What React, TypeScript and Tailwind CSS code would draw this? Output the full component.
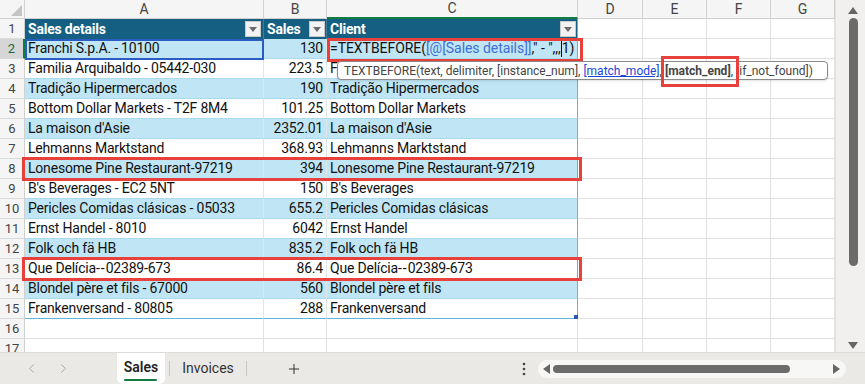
import React from "react";
import { ChevronLeft, ChevronRight, Plus } from "lucide-react";

const FONT = { fontFamily: "Roboto, 'Noto Sans', sans-serif" } as const;

const data: [string, string, string][] = [
  ["Franchi S.p.A. - 10100", "130", ""],
  ["Familia Arquibaldo - 05442-030", "223.5", "F"],
  ["Tradição Hipermercados", "190", "Tradição Hipermercados"],
  ["Bottom Dollar Markets - T2F 8M4", "101.25", "Bottom Dollar Markets"],
  ["La maison d'Asie", "2352.01", "La maison d'Asie"],
  ["Lehmanns Marktstand", "368.93", "Lehmanns Marktstand"],
  ["Lonesome Pine Restaurant-97219", "394", "Lonesome Pine Restaurant-97219"],
  ["B's Beverages - EC2 5NT", "150", "B's Beverages"],
  ["Pericles Comidas clásicas - 05033", "655.2", "Pericles Comidas clásicas"],
  ["Ernst Handel - 8010", "6042", "Ernst Handel"],
  ["Folk och fä HB", "835.2", "Folk och fä HB"],
  ["Que Delícia--02389-673", "86.4", "Que Delícia--02389-673"],
  ["Blondel père et fils - 67000", "560", "Blondel père et fils"],
  ["Frankenversand - 80805", "288", "Frankenversand"],
];

function Txt({ s }: { s: string }) {
  if (!s.includes("--")) return <>{s}</>;
  const [a, b] = s.split("--");
  return (
    <>
      {a}
      <span className="tracking-[1px]">--</span>
      {b}
    </>
  );
}

function FilterBtn() {
  return (
    <div className="w-[16px] h-[16px] bg-[#f2f2f2] border border-[#c9c9c9] flex items-center justify-center shrink-0">
      <svg width="8" height="5" viewBox="0 0 8 5">
        <path d="M0 0 L8 0 L4 5 Z" fill="#6b6b6b" />
      </svg>
    </div>
  );
}

function EmptyCells() {
  return (
    <>
      <div className="w-[65px] shrink-0 border-r border-b border-[#e1e1e1]" />
      <div className="w-[64px] shrink-0 border-r border-b border-[#e1e1e1]" />
      <div className="w-[64px] shrink-0 border-r border-b border-[#e1e1e1]" />
      <div className="w-[64px] shrink-0 border-r border-b border-[#e1e1e1]" />
    </>
  );
}

function RowHead({ n, active }: { n: number; active?: boolean }) {
  return (
    <div
      className={
        "w-[25px] shrink-0 flex items-center justify-center text-[13px] tracking-normal border-b border-[#dadada] " +
        (active
          ? "bg-[#d6d6d6] text-[#1d6b40] border-r-2 border-r-[#107c41]"
          : "bg-[#f5f5f5] text-[#444] border-r border-r-[#d0d0d0]")
      }
    >
      {n}
    </div>
  );
}

export default function App() {
  return (
    <div className="w-[865px] h-[384px] overflow-hidden bg-white flex flex-col text-[#111]" style={FONT}>
      <div className="flex h-[352px] overflow-hidden">
        {/* sheet */}
        <div
          className="relative w-[835px] h-[352px] overflow-hidden flex flex-col text-[14px] tracking-[-0.2px]"
          style={{ fontVariantLigatures: "none" }}
        >
          {/* column headers */}
          <div className="flex h-[19px] shrink-0 bg-[#f5f5f5] text-[#444] text-[14px] tracking-normal">
            <div className="w-[25px] shrink-0 border-r border-b border-[#d0d0d0] relative">
              <svg className="absolute right-[2px] bottom-[2px]" width="11" height="11" viewBox="0 0 11 11">
                <path d="M11 0 L11 11 L0 11 Z" fill="#c4c4c4" />
              </svg>
            </div>
            <div className="w-[239px] shrink-0 border-r border-b border-[#d0d0d0] flex items-center justify-center">A</div>
            <div className="w-[63px] shrink-0 border-r border-b border-[#d0d0d0] flex items-center justify-center">B</div>
            <div className="w-[251px] shrink-0 border-r border-[#d0d0d0] border-b-2 border-b-[#107c41] flex items-center justify-center">C</div>
            <div className="w-[65px] shrink-0 border-r border-b border-[#d0d0d0] flex items-center justify-center">D</div>
            <div className="w-[64px] shrink-0 border-r border-b border-[#d0d0d0] flex items-center justify-center">E</div>
            <div className="w-[64px] shrink-0 border-r border-b border-[#d0d0d0] flex items-center justify-center">F</div>
            <div className="w-[64px] shrink-0 border-r border-b border-[#d0d0d0] flex items-center justify-center">G</div>
          </div>

          {/* row 1: table header */}
          <div className="flex h-[20px] shrink-0">
            <RowHead n={1} />
            <div className="w-[239px] shrink-0 bg-[#156082] text-white font-bold flex items-center justify-between pl-[3px] pr-[2px] border-r border-[#3f7c9b]">
              <span>Sales details</span>
              <FilterBtn />
            </div>
            <div className="w-[63px] shrink-0 bg-[#156082] text-white font-bold flex items-center justify-between pl-[3px] pr-[1px] border-r border-[#3f7c9b]">
              <span>Sales</span>
              <FilterBtn />
            </div>
            <div className="w-[251px] shrink-0 bg-[#156082] text-white font-bold flex items-center justify-between pl-[3px] pr-[1px] border-r border-[#5fb4d8]">
              <span>Client</span>
              <FilterBtn />
            </div>
            <EmptyCells />
          </div>

          {/* table body */}
          {data.map((r, i) => {
            const n = i + 2;
            const band = n % 2 === 0;
            const last = n === 15;
            const bg = band ? "bg-[#c0e6f5]" : "bg-white";
            const bb = last ? "border-b border-b-[#5fb4d8]" : "border-b border-b-[#a9d9ef]";
            return (
              <div key={n} className="flex h-[20px] shrink-0">
                <RowHead n={n} active={n === 2} />
                <div className={`w-[239px] shrink-0 ${bg} ${bb} border-r border-r-[#dfe6ea] flex items-center pl-[3px] whitespace-nowrap overflow-hidden`}>
                  <Txt s={r[0]} />
                </div>
                <div className={`w-[63px] shrink-0 ${bg} ${bb} border-r border-r-[#dfe6ea] flex items-center justify-end pr-[3px] whitespace-nowrap`}>
                  {r[1]}
                </div>
                <div className={`relative w-[251px] shrink-0 ${bg} ${bb} border-r border-r-[#5fb4d8] flex items-center pl-[3px] whitespace-nowrap`}>
                  {n === 2 ? (
                    <span className="flex items-center tracking-[-0.05px]">
                      <span>=TEXTBEFORE(</span>
                      <span className="text-[#3d6fd6]">[@[Sales details]]</span>
                      <span>," - ",,,</span>
                      <span className="inline-block w-[1px] h-[16px] bg-black" />
                      <span>1)</span>
                    </span>
                  ) : (
                    <Txt s={r[2]} />
                  )}
                  {last && <div className="absolute right-[-1px] bottom-[-1px] w-[4px] h-[4px] bg-[#2a56b8]" />}
                </div>
                <EmptyCells />
              </div>
            );
          })}

          {/* empty rows */}
          {[16, 17].map((n) => (
            <div key={n} className="flex h-[20px] shrink-0">
              <RowHead n={n} />
              <div className="w-[239px] shrink-0 border-r border-b border-[#e1e1e1]" />
              <div className="w-[63px] shrink-0 border-r border-b border-[#e1e1e1]" />
              <div className="w-[251px] shrink-0 border-r border-b border-[#e1e1e1]" />
              <EmptyCells />
            </div>
          ))}

          {/* overlays */}
          <div className="absolute left-[25px] top-[39px] w-[239px] h-[21px] border-2 border-[#2a5cc4] pointer-events-none" />
          <div className="absolute left-[327px] top-[38px] w-[256px] h-[24px] border-[3px] border-[#e8403a] pointer-events-none" />
          <div className="absolute left-[22px] top-[157px] w-[560px] h-[24px] border-[3px] border-[#e8403a] pointer-events-none" />
          <div className="absolute left-[22px] top-[257px] w-[560px] h-[24px] border-[3px] border-[#e8403a] pointer-events-none" />

          {/* tooltip */}
          <div className="absolute left-[337px] top-[61px] w-[491px] h-[19px] bg-white border border-[#8a8a8a] rounded-[4px] flex items-center pl-[6px] text-[12px] text-[#444] tracking-[0px] whitespace-nowrap shadow-sm">
            <span>TEXTBEFORE(text, delimiter, [instance_num],&nbsp;</span>
            <span className="text-[#1a47d6] underline">[match_mode]</span>
            <span>,&nbsp;</span>
            <span className="font-bold">[match_end]</span>
            <span>, [if_not_found])</span>
          </div>
          <div className="absolute left-[661px] top-[56px] w-[78px] h-[31px] border-[3px] border-[#e8403a] pointer-events-none" />
        </div>

        {/* vertical scrollbar */}
        <div className="relative w-[30px] h-[352px] bg-[#f1f0ee] border-l border-[#e4e3e0]">
          <svg className="absolute left-[12px] top-[7px]" width="10" height="7" viewBox="0 0 10 7">
            <path d="M5 0 L10 7 L0 7 Z" fill="#666" />
          </svg>
          <div className="absolute left-[13px] top-[18px] w-[9px] h-[248px] rounded-full bg-[#6b6b6b]" />
          <svg className="absolute left-[12px] top-[342px]" width="10" height="7" viewBox="0 0 10 7">
            <path d="M0 0 L10 0 L5 7 Z" fill="#666" />
          </svg>
        </div>
      </div>

      {/* tab bar */}
      <div className="flex h-[32px] bg-[#ebe9e5] items-stretch text-[14px] text-[#333] border-t border-[#dedcd8]">
        <div className="w-[117px] flex items-center text-[#a9a9a9]">
          <ChevronLeft size={15} strokeWidth={1.6} className="ml-[24px]" />
          <ChevronRight size={15} strokeWidth={1.6} className="ml-[17px]" />
        </div>
        <div className="w-[48px] bg-white rounded-b-[6px] flex flex-col items-center justify-center relative">
          <span className="font-semibold text-[#222] -mt-[2px]">Sales</span>
          <div className="absolute left-[7px] right-[8px] bottom-[3px] h-[2px] bg-[#107c41] rounded" />
        </div>
        <div className="w-[4px]" />
        <div className="w-[1px] my-[8px] bg-[#c9c7c3]" />
        <div className="w-[76px] flex items-center justify-center text-[#333]">Invoices</div>
        <div className="w-[1px] my-[8px] bg-[#c9c7c3]" />
        <div className="w-[39px]" />
        <div className="flex items-center">
          <Plus size={16} strokeWidth={1.5} className="text-[#333]" />
        </div>
        <div className="w-[220px]" />
        <div className="flex items-center">
          <svg width="4" height="14" viewBox="0 0 4 14">
            <circle cx="2" cy="2" r="1.3" fill="#444" />
            <circle cx="2" cy="7" r="1.3" fill="#444" />
            <circle cx="2" cy="12" r="1.3" fill="#444" />
          </svg>
        </div>
        <div className="w-[12px]" />
        <div className="flex items-center">
          <div className="relative w-[308px] h-[18px] bg-[#f7f7f6] rounded-full">
            <svg className="absolute left-[5px] top-[4px]" width="7" height="10" viewBox="0 0 7 10">
              <path d="M7 0 L7 10 L0 5 Z" fill="#666" />
            </svg>
            <div className="absolute left-[15px] top-[5px] w-[237px] h-[8px] rounded-full bg-[#6b6b6b]" />
            <svg className="absolute left-[295px] top-[4px]" width="7" height="10" viewBox="0 0 7 10">
              <path d="M0 0 L7 5 L0 10 Z" fill="#666" />
            </svg>
          </div>
        </div>
      </div>
    </div>
  );
}
